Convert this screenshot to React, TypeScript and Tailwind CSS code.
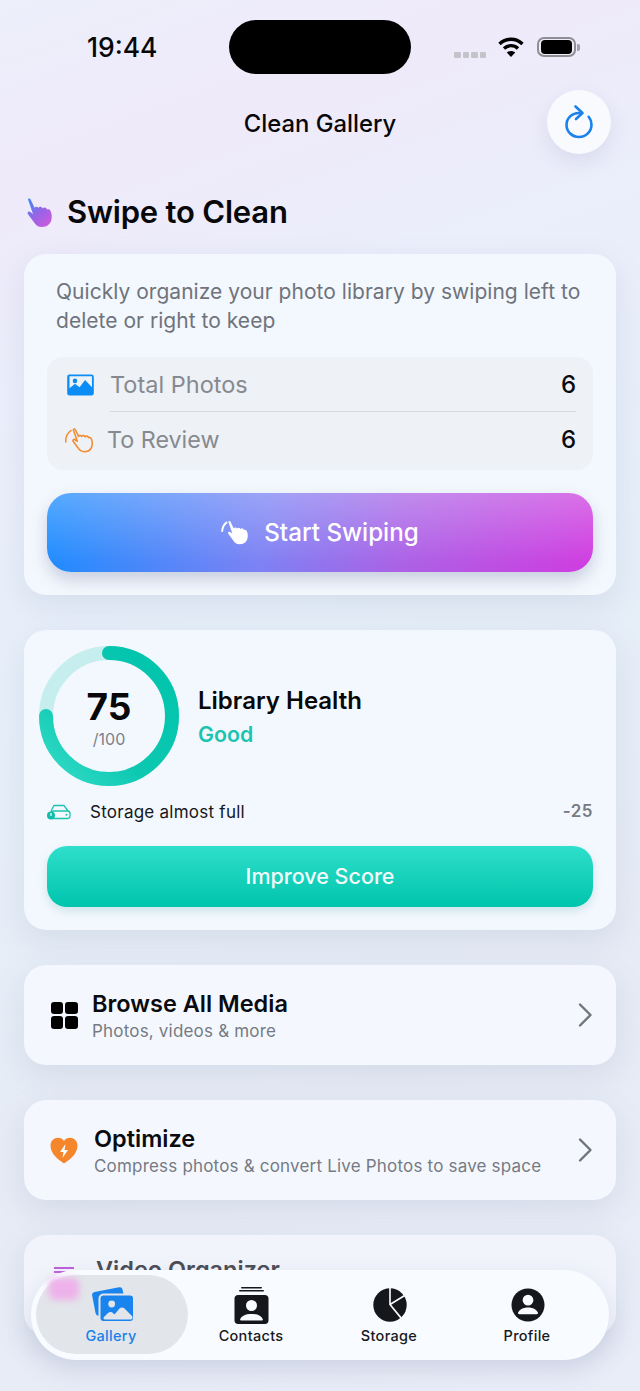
import React from 'react';

const font = { fontFamily: 'Inter, "Noto Sans", sans-serif' };

// hand with raised index finger, drawn in a 25x29 box
const HAND =
  'M1 1.500C1 .3 3 .2 3.500 1.300L7.600 9.800C8.300 8.600 10 8.200 11 9.200L11.500 10C12 8.600 14 8.300 15 9.400L15.800 10.500C16.500 9.200 18.300 9 19.300 10.200L20 11.500C21 10.800 22.600 11.200 23.300 12.600C24.600 15 25 18 24.600 20.500C24 26 20 29 15 29C11 29 8.500 27 6.800 24L.8 16C0 14.700 1.300 13 2.900 13.800L6 16Z';

const Row = ({ title, sub, icon, gap }: { title: string; sub: string; icon: React.ReactNode; gap: string }) => (
  <div className="flex h-[100px] items-center rounded-[22px] bg-[#f4f8fe] pl-[26px] pr-[23px] shadow-[0_10px_30px_rgba(120,135,170,0.16)]">
    <div className={`flex w-[28px] shrink-0 justify-center ${gap}`}>{icon}</div>
    <div className="flex-1 pt-[1px]">
      <div className="text-[23.500px] font-semibold leading-[29px] text-[#0b0b0f]">{title}</div>
      <div className="mt-[1px] text-[17px] leading-[24px] tracking-[0.19px] text-[#767a84]">{sub}</div>
    </div>
    <svg className="h-[28px] w-[16px] shrink-0" viewBox="0 0 16 28" fill="none">
      <path d="M3 3.500 13.500 14 3 24.500" stroke="#70747c" strokeWidth="2.400" strokeLinecap="round" strokeLinejoin="round" />
    </svg>
  </div>
);

const Tab = ({ label, active, icon, width }: { label: string; active?: boolean; icon: React.ReactNode; width: string }) => (
  <div className={`flex flex-col items-center ${width}`}>
    <div className="flex h-[38px] items-end">{icon}</div>
    <div className={`mt-[4px] text-[14.500px] font-medium leading-[20px] tracking-[0.3px] ${active ? 'text-[#1a80ea]' : 'text-[#17191d]'}`}>{label}</div>
  </div>
);

export default function App() {
  return (
    <div
      style={font}
      className="relative h-[1391px] w-[640px] overflow-hidden bg-[linear-gradient(160deg,#edeffb_0%,#efeafa_12%,#ebeefb_25%,#e6eff9_45%,#e6ebf5_75%,#e9edf8_100%)]"
    >
      {/* status bar */}
      <div className="relative flex h-[90px] items-start">
        <div className="ml-[87px] mt-[31px] text-[26.500px] font-medium leading-[32px] text-[#08080a]">19:44</div>
        <div className="absolute left-[229px] top-[20px] h-[54px] w-[182px] rounded-[27px] bg-black" />
        <div className="ml-auto mr-[64px] mt-[36px] flex items-center">
          <div className="mt-[15px] flex gap-[2px]">
            {[0, 1, 2, 3].map((i) => (
              <div key={i} className="h-[6px] w-[6.500px] rounded-[1px] bg-[#c3c4ca]" />
            ))}
          </div>
          <svg className="ml-[12px] h-[22px] w-[26px]" viewBox="0 0 26 22" fill="none">
            <path d="M1.500 8C8 1.700 18 1.700 24.500 8" stroke="#000" strokeWidth="3.400" />
            <path d="M6 12.500c4-3.800 10-3.800 14 0" stroke="#000" strokeWidth="3.400" />
            <path d="M13 21 8.800 16.500c2.500-2 5.900-2 8.400 0z" fill="#000" />
          </svg>
          <div className="relative ml-[13px] flex h-[20px] w-[39px] items-center justify-center rounded-[7px] border-[2px] border-[#8e8e93]">
            <div className="h-[14px] w-[31px] rounded-[4px] bg-black" />
            <div className="absolute -right-[6px] h-[7px] w-[3px] rounded-r-[2px] bg-[#a0a0a6]" />
          </div>
        </div>
      </div>

      {/* header */}
      <div className="relative flex h-[64px] items-center justify-center pt-[4px]">
        <div className="text-[23.800px] font-medium leading-[30px] text-[#08080a]">Clean Gallery</div>
        <div className="absolute left-[547px] top-0 flex h-[64px] w-[64px] items-center justify-center rounded-full bg-[#f8fafe] shadow-[0_8px_20px_rgba(120,125,170,0.16)]">
          <svg className="h-[36px] w-[32px]" viewBox="0 0 32 36" fill="none">
            <path d="M16.500 9C9.500 8.500 3.500 14 3.500 20.800 3.500 27.800 9 33 16 33c7 0 12.500-5.500 12.500-12.300 0-3-1-5.700-2.800-7.900" stroke="#1a82ea" strokeWidth="2.600" strokeLinecap="round" />
            <path d="M12.500 2.500 19.500 9l-6.500 6" stroke="#1a82ea" strokeWidth="2.600" strokeLinecap="round" strokeLinejoin="round" />
          </svg>
        </div>
      </div>

      {/* section title */}
      <div className="mt-[36px] flex h-[44px] items-center pl-[27px]">
        <svg className="h-[29px] w-[25px]" viewBox="0 0 25 29">
          <defs>
            <linearGradient id="swipe" x1="0" y1="0" x2="0.8" y2="1">
              <stop offset="0" stopColor="#3d8bf5" />
              <stop offset="0.55" stopColor="#9a63e6" />
              <stop offset="1" stopColor="#c95bdc" />
            </linearGradient>
          </defs>
          <path d={HAND} fill="url(#swipe)" />
        </svg>
        <div className="ml-[15px] text-[31px] font-semibold leading-[38px] tracking-[-0.2px] text-[#08080a]">Swipe to Clean</div>
      </div>

      <div className="mx-[24px] mt-[20px] flex flex-col gap-[35px]">
        {/* swipe card */}
        <div className="h-[341px] rounded-[22px] bg-[#f3f8fe] px-[23px] pt-[23px] shadow-[0_10px_30px_rgba(120,135,170,0.16)]">
          <div className="pl-[9px] text-[21px] leading-[29px] tracking-[0.03px] text-[#6f737c]">
            Quickly organize your photo library by swiping left to delete or right to keep
          </div>
          <div className="mt-[22px] h-[113px] rounded-[16px] bg-[#eef1f5] pl-[19px] pr-[17px]">
            <div className="flex h-[54px] items-center pt-[2px]">
              <svg className="h-[22px] w-[29px]" viewBox="0 0 30 24">
                <path fillRule="evenodd" d="M3 .5h24A2.500 2.500 0 0 1 29.500 3v18a2.500 2.500 0 0 1-2.500 2.500H3A2.500 2.500 0 0 1 .5 21V3A2.500 2.500 0 0 1 3 .5zm0 2v13l6-5 5 4 6-8 7.500 8v-12zM9 5a2.500 2.500 0 1 1 0 5 2.500 2.500 0 0 1 0-5z" fill="#0c8cf5" />
              </svg>
              <div className="ml-[15px] flex-1 text-[23.500px] leading-[30px] text-[#868a90]">Total Photos</div>
              <div className="text-[24px] font-medium text-[#0b0b0f]">6</div>
            </div>
            <div className="ml-[44px] h-px bg-[#d5d8dc]" />
            <div className="flex h-[58px] items-center pb-[2px]">
              <svg className="-ml-[1px] h-[26px] w-[28px]" viewBox="0 0 28 26" fill="none" stroke="#f28a2e" strokeWidth="1.500" strokeLinecap="round" strokeLinejoin="round">
                <path d="M.8 15C.5 10.500 2.500 6 6 3.500" />
                <path d={HAND} transform="translate(7.500 1.500) scale(.8)" strokeWidth="1.900" />
              </svg>
              <div className="ml-[14px] flex-1 text-[23.300px] leading-[30px] text-[#868a90]">To Review</div>
              <div className="text-[24px] font-medium text-[#0b0b0f]">6</div>
            </div>
          </div>
          <div className="mt-[23px] flex h-[79px] items-center justify-center rounded-[24px] bg-[linear-gradient(180deg,rgba(255,255,255,0.26)_0%,rgba(255,255,255,0)_90%),linear-gradient(100deg,#1a8cff_0%,#7d82f4_40%,#ab62e6_65%,#d03ce0_100%)] shadow-[0_8px_16px_rgba(90,100,140,0.28)]">
            <svg className="h-[25px] w-[27px]" viewBox="0 0 27 25" fill="none">
              <path d="M1.200 11C1.500 7.500 3 4.500 5.500 2.500" stroke="#fff" strokeWidth="2" strokeLinecap="round" />
              <path d={HAND} fill="#fff" transform="translate(6.500 .5) scale(.82)" />
            </svg>
            <div className="ml-[16px] text-[24.200px] font-medium leading-[30px] text-white">Start Swiping</div>
          </div>
        </div>

        {/* health card */}
        <div className="h-[300px] rounded-[22px] bg-[#f3f8fe] px-[23px] pt-[16px] shadow-[0_10px_30px_rgba(120,135,170,0.16)]">
          <div className="flex items-center">
            <div className="relative -ml-[8px] h-[140px] w-[140px]">
              <svg className="h-[140px] w-[140px]" viewBox="0 0 140 140" fill="none">
                <defs>
                  <linearGradient id="ring" x1="0" y1="1" x2="1" y2="0">
                    <stop offset="0" stopColor="#35dcc8" />
                    <stop offset="0.4" stopColor="#0cc8b1" />
                    <stop offset="1" stopColor="#00c4ac" />
                  </linearGradient>
                </defs>
                <circle cx="70" cy="70" r="63" stroke="#c6eeee" strokeWidth="14" />
                <path d="M70 7A63 63 0 1 1 7 70" stroke="url(#ring)" strokeWidth="14" strokeLinecap="round" />
              </svg>
              <div className="absolute inset-0 flex flex-col items-center justify-center">
                <div className="mt-[1px] text-[37px] font-bold leading-[44px] text-[#08080a]">75</div>
                <div className="text-[16px] leading-[20px] text-[#7d8189]">/100</div>
              </div>
            </div>
            <div className="ml-[19px] pt-[2px]">
              <div className="text-[24px] font-semibold leading-[32px] text-[#08080a]">Library Health</div>
              <div className="mt-[1px] text-[21.300px] font-semibold leading-[32px] text-[#1cc4b0]">Good</div>
            </div>
          </div>
          <div className="mt-[14px] flex h-[24px] items-center">
            <svg className="h-[16px] w-[24px]" viewBox="0 0 24 16" fill="none">
              <path d="M4 7 7 1.500h10L21 7" stroke="#1cc4b0" strokeWidth="1.300" />
              <rect x="4" y="7" width="19" height="7.500" rx="2.500" stroke="#1cc4b0" strokeWidth="1.300" />
              <circle cx="4" cy="11.500" r="4" fill="#12bca8" />
              <rect x="3.400" y="9" width="1.200" height="3" fill="#fff" />
              <circle cx="19.500" cy="10.800" r="1" fill="#1cc4b0" />
            </svg>
            <div className="ml-[19px] flex-1 text-[17px] leading-[22px] tracking-[0.25px] text-[#15171b]">Storage almost full</div>
            <div className="text-[17px] font-semibold tracking-[0.5px] text-[#777b83]">-25</div>
          </div>
          <div className="mt-[22px] flex h-[61px] items-center justify-center rounded-[20px] bg-[linear-gradient(180deg,#2fdfcb_0%,#00c4ac_100%)] text-[21.500px] font-medium text-[#f2fbfa] shadow-[0_4px_10px_rgba(60,150,150,0.2)]">
            Improve Score
          </div>
        </div>

        <Row
          title="Browse All Media"
          sub="Photos, videos & more"
          gap="mr-[14px]"
          icon={
            <div className="grid grid-cols-2 gap-[2px]">
              {[0, 1, 2, 3].map((i) => (
                <div key={i} className="h-[12.500px] w-[12.500px] rounded-[3px] bg-black" />
              ))}
            </div>
          }
        />
        <Row
          title="Optimize"
          sub="Compress photos & convert Live Photos to save space"
          gap="mr-[16px]"
          icon={
            <svg className="h-[27px] w-[28px]" viewBox="0 0 28 27">
              <path d="M14 26.500C9 23 .5 17.500.5 8.500.5 4 4 .7 8 .7c2.500 0 4.700 1.200 6 3.200C15.300 1.900 17.500.7 20 .7c4 0 7.500 3.300 7.500 7.800 0 9-8.500 14.500-13.500 18z" fill="#f5862c" />
              <path d="M15.500 7 10 15h3.500l-1 6 5.500-8h-3.500z" fill="#fff" />
            </svg>
          }
        />
        <div className="h-[100px] rounded-[22px] bg-[#f1f4fb] pl-[26px] pr-[24px] pt-[20px] shadow-[0_10px_30px_rgba(120,135,170,0.16)]">
          <div className="flex items-start">
            <div className="mt-[12px] flex w-[28px] flex-col gap-[2px] pl-[4px]">
              <div className="h-[2px] w-[20px] bg-[#c05fdc]" />
              <div className="h-[2px] w-[22px] bg-[#c05fdc]" />
            </div>
            <div className="ml-[18px] text-[23.500px] font-semibold leading-[29px] text-[#4b4d55]">Video Organizer</div>
          </div>
        </div>
      </div>

      {/* bottom tab bar */}
      <div className="absolute left-[31px] top-[1270px] flex h-[90px] w-[578px] items-center rounded-[45px] bg-[#f8fbff] pl-[9px] shadow-[0_10px_26px_rgba(110,120,160,0.2)]">
        <div className="absolute left-[5px] top-[5px] h-[79px] w-[152px] rounded-[40px] bg-[#e2e5e9]" />
        <div className="absolute left-[18px] top-[8px] h-[22px] w-[30px] rounded-[6px] bg-[#eeb2ea] blur-[3px]" />
        <div className="relative flex">
          <Tab
            label="Gallery"
            active
            width="w-[142px]"
            icon={
              <svg className="ml-[4px] h-[36px] w-[42px]" viewBox="0 0 42 36">
                <rect x="1.500" y="3.500" width="31" height="24" rx="3" fill="#1a84ee" transform="rotate(-11 17 15)" />
                <rect x="7.500" y="8.500" width="34.500" height="27.500" rx="4" fill="#1a84ee" stroke="#e2e5e9" strokeWidth="2" />
                <circle cx="19.700" cy="18" r="3.400" fill="#e2e5e9" />
                <path d="M13 33.500C11.500 33.500 11 32 12 31L16 27C17.500 25.500 19.500 25.500 21 27L22.500 28.500 27.500 22.500C29 21 31 21 32.500 22.500L40 30C41 31.500 40.500 33.500 38.500 33.500Z" fill="#e2e5e9" />
              </svg>
            }
          />
          <Tab
            label="Contacts"
            width="w-[138px]"
            icon={
              <svg className="-mb-[2px] h-[37px] w-[35px]" viewBox="0 0 35 37">
                <rect x="7" y="0" width="21" height="1.600" rx=".8" fill="#15171b" />
                <rect x="5" y="3" width="25" height="1.600" rx=".8" fill="#15171b" />
                <path fillRule="evenodd" d="M4 8h27c2 0 3.500 1.500 3.500 3.500v22c0 2-1.500 3.500-3.500 3.500H4c-2 0-3.500-1.500-3.500-3.500v-22C.5 9.500 2 8 4 8zm13.500 5a5.500 5.500 0 1 0 0 11 5.500 5.500 0 0 0 0-11zM7 33.500h21c.8 0 1-.6.800-1.200-1.300-3.300-5-5.300-11.300-5.300s-10 2-11.300 5.300c-.2.600 0 1.200.8 1.200z" fill="#15171b" />
              </svg>
            }
          />
          <Tab
            label="Storage"
            width="w-[138px]"
            icon={
              <svg className="ml-[2px] h-[34px] w-[34px]" viewBox="0 0 35 35" fill="none">
                <circle cx="17.500" cy="17.500" r="17.200" fill="#15171b" />
                <path d="M17.500 0V17L29 31M17.500 17 33 7.500" stroke="#f8fbff" strokeWidth="1.700" />
              </svg>
            }
          />
          <Tab
            label="Profile"
            width="w-[138px]"
            icon={
              <svg className="ml-[2px] h-[34px] w-[34px]" viewBox="0 0 35 35">
                <circle cx="17.500" cy="17.500" r="17" fill="#15171b" />
                <circle cx="17.500" cy="12.500" r="5.500" fill="#f8fbff" />
                <path d="M8.500 27c-1 0-1.500-.7-1.300-1.500 1.200-3.300 5-5.500 10.300-5.500s9 2.200 10.300 5.500c.2.800-.3 1.500-1.300 1.500z" fill="#f8fbff" />
              </svg>
            }
          />
        </div>
      </div>
    </div>
  );
}
